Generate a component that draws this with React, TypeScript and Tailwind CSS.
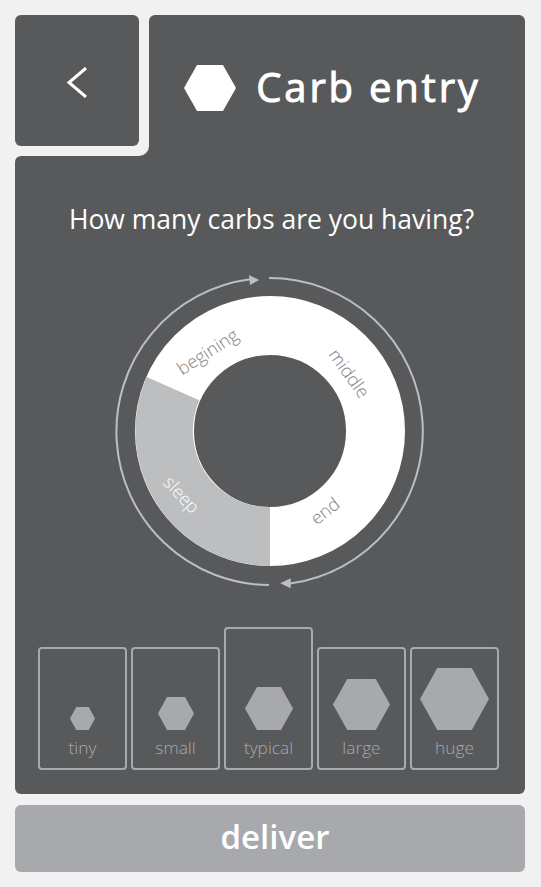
const SIZES = [
  { label: "tiny", w: 25, h: 23, tall: false },
  { label: "small", w: 36, h: 33, tall: false },
  { label: "typical", w: 48, h: 43, tall: true },
  { label: "large", w: 57, h: 51, tall: false },
  { label: "huge", w: 69, h: 62, tall: false },
];

function Hexagon({ w, h, className }: { w: number; h: number; className: string }) {
  return (
    <svg width={w} height={h} viewBox="0 0 100 88" preserveAspectRatio="none" className={className}>
      <polygon points="0,44 25,0 75,0 100,44 75,88 25,88" fill="currentColor" />
    </svg>
  );
}

function Dial() {
  return (
    <svg width="340" height="340" viewBox="0 0 340 340" className="block">
      {/* ring segments: centre 170,170 */}
      <circle cx="170" cy="170" r="105.5" fill="none" stroke="#ffffff" strokeWidth="59" />
      <path d="M170 305 A135 135 0 0 1 46.7 116 L99.3 139.3 A76 76 0 0 0 170 246 Z" fill="#bcbec0" />

      {/* outer arrows */}
      <path d="M169 17 A153.5 153.5 0 0 1 190 322.6" fill="none" stroke="#bcbec0" strokeWidth="2" />
      <path d="M169 324 A153.5 153.5 0 0 1 150 18.3" fill="none" stroke="#bcbec0" strokeWidth="2" />
      <polygon points="159.3,19 149,14 150,24" fill="#bcbec0" />
      <polygon points="180.3,322.3 190.7,317.3 190.7,327.3" fill="#bcbec0" />

      <g fontFamily="'Open Sans', sans-serif" fontWeight="300" fontSize="18">
        <text x="0" y="0" textAnchor="middle" fill="#808285" transform="translate(111 96) rotate(-33)">begining</text>
        <text x="0" y="0" textAnchor="middle" fill="#808285" transform="translate(244 116) rotate(54)">middle</text>
        <text x="0" y="0" textAnchor="middle" fill="#808285" transform="translate(229 255) rotate(-38)">end</text>
        <text x="0" y="0" textAnchor="middle" fill="#ffffff" transform="translate(77 238) rotate(47)">sleep</text>
      </g>
    </svg>
  );
}

export default function App() {
  return (
    <div className="h-[887px] w-[541px] overflow-hidden bg-[#f1f1f1] px-[15px] py-[15px] font-['Open_Sans',sans-serif]">
      {/* Top row */}
      <div className="relative flex h-[141px] w-[510px]">
        <div className="absolute bottom-0 left-[124px] h-[10px] w-[10px] bg-[#58595b]" />
        <div className="relative w-[134px] shrink-0 rounded-br-[10px] bg-[#f1f1f1]">
          <button className="flex h-[131px] w-[124px] items-center justify-center rounded-[6px] bg-[#58595b] pt-[3px] text-white">
            <svg width="22" height="31" viewBox="0 0 22 31" fill="none" stroke="currentColor" strokeWidth="3">
              <polyline points="20,1 3,15.5 20,30" />
            </svg>
          </button>
        </div>
        <div className="flex flex-1 items-center justify-center gap-[20px] rounded-t-[6px] bg-[#58595b] pr-[9px] pt-[5px]">
          <Hexagon w={52} h={46} className="shrink-0 text-white" />
          <h1 className="-mt-[2px] text-[40px] font-normal leading-none tracking-[2.8px] text-white [-webkit-text-stroke:1px_white]">
            Carb entry
          </h1>
        </div>
      </div>

      {/* Main panel */}
      <div className="flex h-[638px] w-[510px] flex-col items-center rounded-b-[6px] rounded-tl-[6px] bg-[#58595b]">
        <p className="ml-[3px] mt-[45px] text-[26.5px] leading-[36px] text-white">How many carbs are you having?</p>
        <div className="mt-[24px]">
          <Dial />
        </div>
        <div className="mr-[3px] mt-[26px] flex h-[143px] items-end gap-[4px]">
          {SIZES.map((s) => (
            <div
              key={s.label}
              className={`flex w-[89px] flex-col items-center justify-end rounded-[4px] border-2 border-[#a7a9ac] pb-[9px] ${
                s.tall ? "h-[143px]" : "h-[123px]"
              }`}
            >
              <Hexagon w={s.w} h={s.h} className="text-[#a7a9ac]" />
              <span className="mt-[7px] text-[17.3px] font-light leading-[22px] text-[#a7a9ac]">{s.label}</span>
            </div>
          ))}
        </div>
      </div>

      {/* Deliver */}
      <button className="mt-[11px] flex h-[67px] w-[510px] items-center justify-center rounded-[6px] bg-[#a7a9ac] pb-[3px] pl-[10px] text-[33px] font-semibold text-white">
        deliver
      </button>
    </div>
  );
}
